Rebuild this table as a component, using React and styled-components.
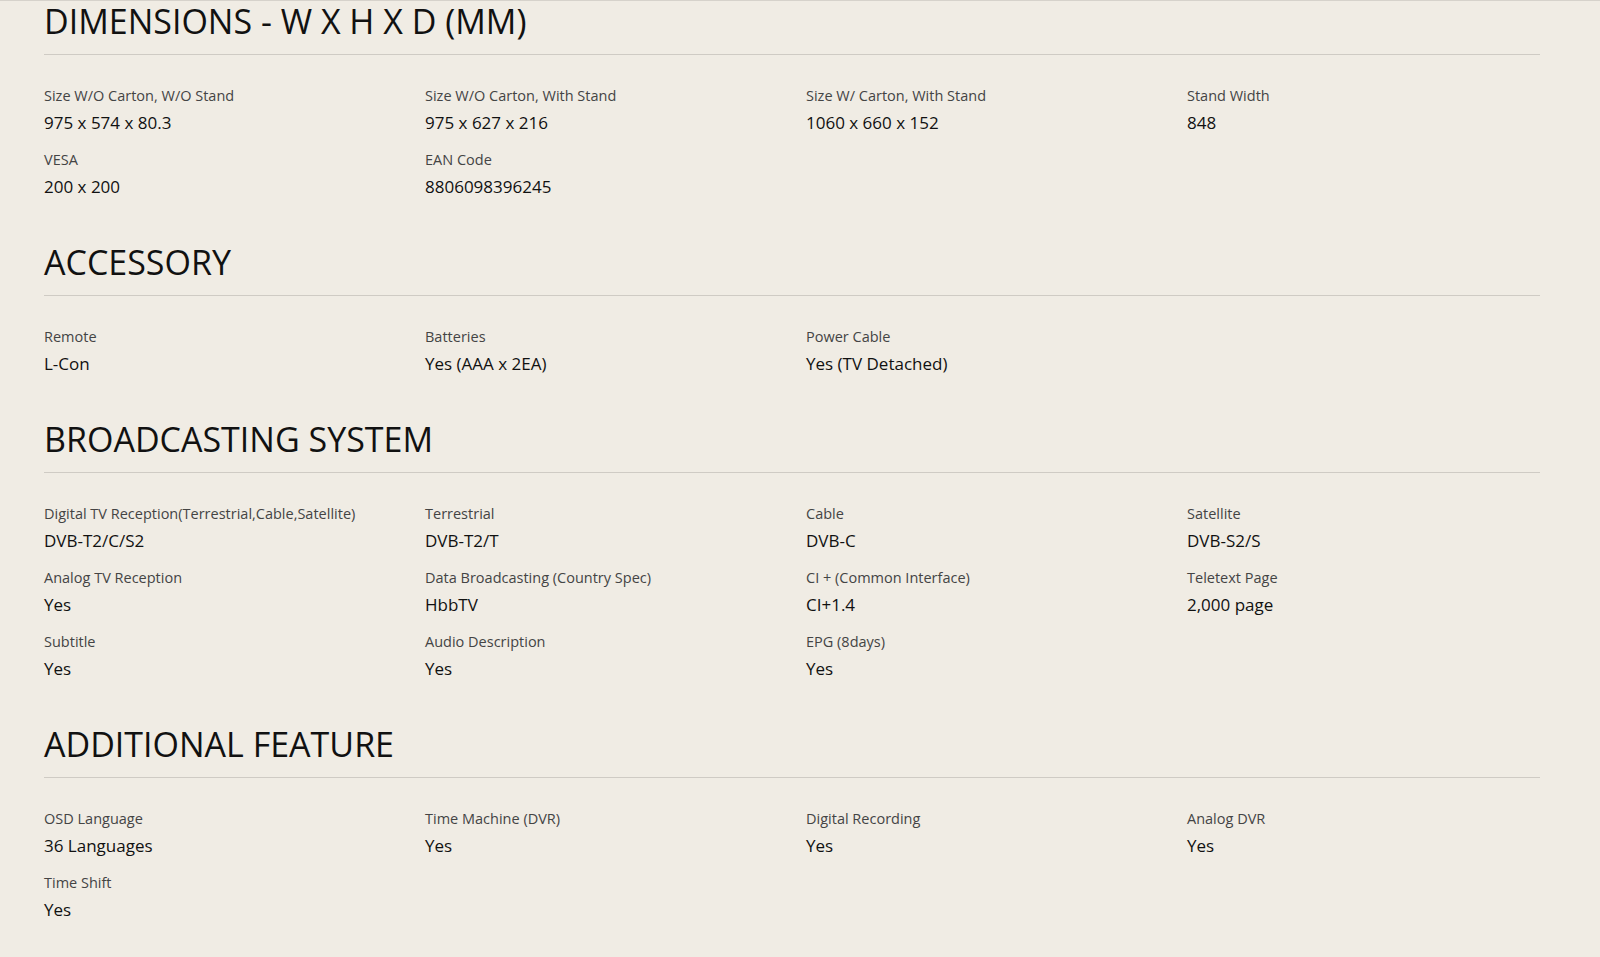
import React from "react";
import styled, { createGlobalStyle } from "styled-components";

const GlobalStyle = createGlobalStyle`
  html, body {
    margin: 0;
    padding: 0;
    background: #f0ece4;
  }
  body {
    font-family: "Open Sans", "Noto Sans", sans-serif;
    color: #111;
  }
`;

const Page = styled.div`
  min-height: 957px;
  box-sizing: border-box;
  border-top: 1px solid #d6d2cb;
  padding: 0 60px 0 44px;
`;

const Section = styled.section`
  margin-bottom: 43px;
  &:last-child {
    margin-bottom: 0;
  }
`;

const SectionTitle = styled.h2`
  margin: 0;
  font-size: 34px;
  line-height: 40px;
  font-weight: 400;
  color: #111;
  padding-bottom: 13px;
  border-bottom: 1px solid #cfcbc4;
`;

const SpecGrid = styled.div`
  display: grid;
  grid-template-columns: repeat(4, 381px);
  row-gap: 15px;
  padding-top: 31px;
`;

const Spec = styled.div`
  display: flex;
  flex-direction: column;
  gap: 5px;
`;

const Label = styled.div`
  font-size: 14.5px;
  line-height: 20px;
  color: #444;
`;

const Value = styled.div`
  font-size: 17px;
  line-height: 24px;
  color: #111;
`;

const SECTIONS = [
  {
    title: "DIMENSIONS - W X H X D (MM)",
    specs: [
      ["Size W/O Carton, W/O Stand", "975 x 574 x 80.3"],
      ["Size W/O Carton, With Stand", "975 x 627 x 216"],
      ["Size W/ Carton, With Stand", "1060 x 660 x 152"],
      ["Stand Width", "848"],
      ["VESA", "200 x 200"],
      ["EAN Code", "8806098396245"],
    ],
  },
  {
    title: "ACCESSORY",
    specs: [
      ["Remote", "L-Con"],
      ["Batteries", "Yes (AAA x 2EA)"],
      ["Power Cable", "Yes (TV Detached)"],
    ],
  },
  {
    title: "BROADCASTING SYSTEM",
    specs: [
      ["Digital TV Reception(Terrestrial,Cable,Satellite)", "DVB-T2/C/S2"],
      ["Terrestrial", "DVB-T2/T"],
      ["Cable", "DVB-C"],
      ["Satellite", "DVB-S2/S"],
      ["Analog TV Reception", "Yes"],
      ["Data Broadcasting (Country Spec)", "HbbTV"],
      ["CI + (Common Interface)", "CI+1.4"],
      ["Teletext Page", "2,000 page"],
      ["Subtitle", "Yes"],
      ["Audio Description", "Yes"],
      ["EPG (8days)", "Yes"],
    ],
  },
  {
    title: "ADDITIONAL FEATURE",
    specs: [
      ["OSD Language", "36 Languages"],
      ["Time Machine (DVR)", "Yes"],
      ["Digital Recording", "Yes"],
      ["Analog DVR", "Yes"],
      ["Time Shift", "Yes"],
    ],
  },
];

const App = () => {
  return (
    <>
      <GlobalStyle />
      <Page>
        {SECTIONS.map(section => (
          <Section key={section.title}>
            <SectionTitle>{section.title}</SectionTitle>
            <SpecGrid>
              {section.specs.map(([label, value]) => (
                <Spec key={label}>
                  <Label>{label}</Label>
                  <Value>{value}</Value>
                </Spec>
              ))}
            </SpecGrid>
          </Section>
        ))}
      </Page>
    </>
  );
};

export default App;
